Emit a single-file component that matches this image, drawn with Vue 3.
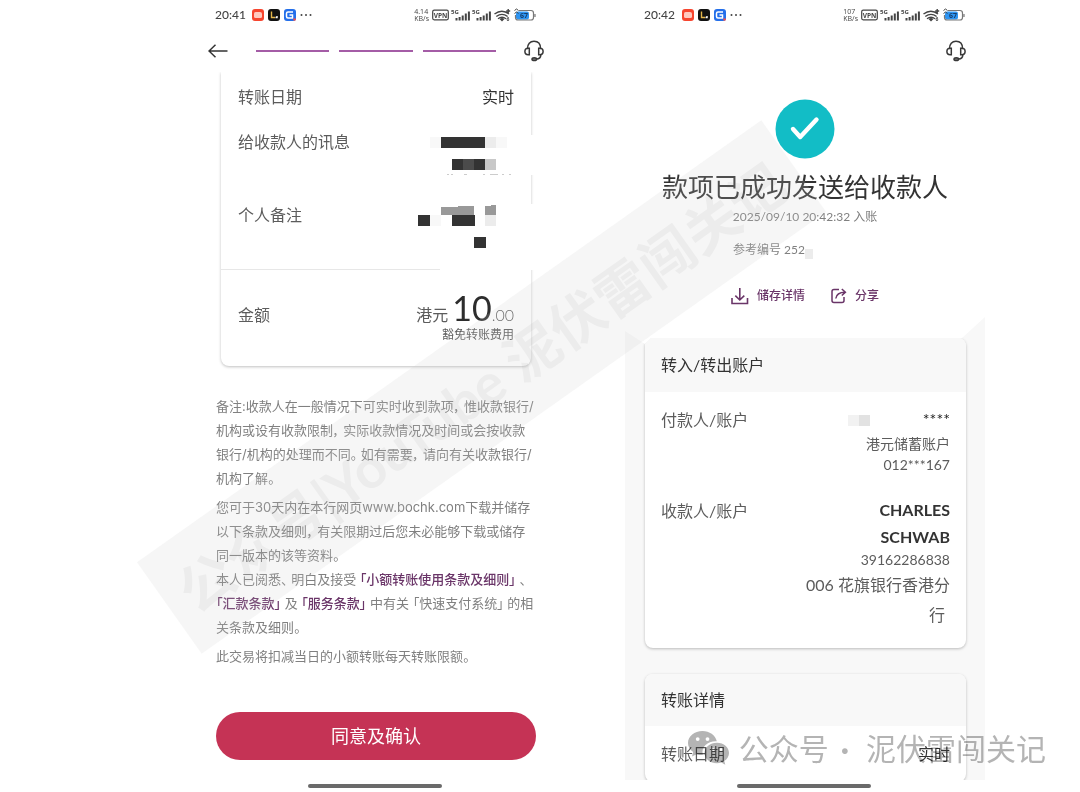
<script setup>
const noteOne = [
  '备注:收款人在一般情况下可实时收到款项， 惟收款银行/',
  '机构或设有收款限制， 实际收款情况及时间或会按收款',
  '银行/机构的处理而不同。 如有需要， 请向有关收款银行/',
  '机构了解。'
]
const noteTwo = [
  '您可于30天内在本行网页www.bochk.com下载并储存',
  '以下条款及细则， 有关限期过后您未必能够下载或储存',
  '同一版本的该等资料。'
]
const phones = [
  { id: 'confirm', time: '20:41', speed: '4.14' },
  { id: 'done', time: '20:42', speed: '107' }
]
</script>

<template>
  <main class="page">
    <section v-for="p in phones" :key="p.id" class="phone" :class="p.id">
      <div class="status">
        <span class="time">{{ p.time }}</span>
        <svg class="apps" width="62" height="12" viewBox="0 0 62 12" aria-hidden="true">
          <rect x="0" y="0" width="12" height="12" rx="3" fill="#f6452f" />
          <path d="M2 4.500q0-1.500 1.500-1.500h4.500q2 0 2 2v2.500q0 1.500-1.500 1.500h-5q-1.500 0-1.500-1.500z" fill="#ffc9bf" />
          <rect x="16" y="0" width="12" height="12" rx="3" fill="#111" />
          <path d="M19.500 2.500v6h3.500" fill="none" stroke="#e3b64b" stroke-width="1.400" />
          <path d="M23.500 8.500h1.500v-1.500" fill="none" stroke="#fff" stroke-width="1.400" />
          <rect x="32" y="0" width="12" height="12" rx="3" fill="#246fea" />
          <path d="M41 3h-5q-1.500 0-1.500 1.500v3q0 1.500 1.500 1.500h4.500v-3h-3" fill="none" stroke="#fff" stroke-width="1.500" />
          <circle cx="42.500" cy="10.500" r="1.300" fill="#f04a4a" />
          <g fill="#444"><circle cx="49.500" cy="6" r="1" /><circle cx="54" cy="6" r="1" /><circle cx="58.500" cy="6" r="1" /></g>
        </svg>
        <span class="speed">{{ p.speed }}<br />KB/s</span>
        <svg class="signals" width="104" height="14" viewBox="0 0 104 14" aria-hidden="true">
          <rect x="0.700" y="2.200" width="15.600" height="9.600" rx="1.500" fill="none" stroke="#444" stroke-width="1.200" />
          <text x="8.500" y="9.500" font-size="6.500" font-weight="700" text-anchor="middle" fill="#444">VPN</text>
          <g fill="#444">
            <text x="19" y="6" font-size="6" font-weight="700">5G</text>
            <path d="M23.500 10h2v2.500h-2zM26.600 9h2v3.500h-2zM29.700 7.500h2v5h-2zM32.800 5.500h2v7h-2zM35.900 3.500h2v9h-2z" />
            <text x="40" y="6" font-size="6" font-weight="700">5G</text>
            <path d="M44.500 10h2v2.500h-2zM47.600 9h2v3.500h-2zM50.700 7.500h2v5h-2zM53.800 5.500h2v7h-2zM56.900 3.500h2v9h-2z" />
            <path d="M67.500 11l2.500 2.500 2.500-2.500q-2.500-2-5 0z" />
            <text x="74.500" y="13" font-size="5" font-weight="700">6</text>
          </g>
          <path d="M62.500 6q7.500-5.500 14.500 0M64.300 8.500q5.700-4.200 11.300 0M66 10.700q4-3 8 0M76.200 1v4M74.200 3h4" fill="none" stroke="#444" stroke-width="1.400" />
          <rect x="84" y="3.500" width="13" height="8" rx="2" fill="#2d95f3" />
          <path d="M87 2.500h12q2.500 0 2.500 2.500v4.500q0 2.500-2.500 2.500h-13q-2.500 0-2.500-2.500v-2.500M103 6v3" fill="none" stroke="#777" stroke-width="1.200" />
          <path d="M82.500 2.500l2-1.500 2 1.500M82.500 5.500l2-1.500 2 1.500" fill="none" stroke="#444" stroke-width="1" />
          <text x="92" y="10" font-size="7" font-weight="700" text-anchor="middle" fill="#173d68">67</text>
        </svg>
      </div>

      <nav class="nav">
        <template v-if="p.id === 'confirm'">
          <button class="icon-button" type="button" aria-label="返回">
            <svg width="20" height="14" viewBox="0 0 20 14"><path d="M19.500 7H1M7.500 .8L1 7l6.500 6.200" fill="none" stroke="#333" stroke-width="1.500" /></svg>
          </button>
          <div class="steps"><i></i><i></i><i></i></div>
        </template>
        <button class="icon-button help" type="button" aria-label="客服">
          <svg width="20" height="22" viewBox="0 0 20 22" fill="none" stroke="#383838" stroke-width="1.500" stroke-linecap="round">
            <path d="M3.500 8.500C3.500 4 6 1.300 10 1.300S16.500 4 16.500 8.500" />
            <path d="M5.300 8.300v6.400H4.200C2.200 14.700.9 13.500.9 11.500S2.200 8.300 4.200 8.300zM14.700 8.300v6.400h1.100c2 0 3.300-1.200 3.300-3.200s-1.300-3.200-3.300-3.200z" />
            <path d="M16.800 14.800c0 3-1.500 4.200-4.300 4.300" />
            <ellipse cx="10.300" cy="19.200" rx="2.300" ry="1.400" fill="#777" />
          </svg>
        </button>
      </nav>

      <template v-if="p.id === 'confirm'">
        <article class="card transfer">
          <dl class="details">
            <div class="row"><dt>转账日期</dt><dd class="dark">实时</dd></div>
            <div class="row message"><dt>给收款人的讯息</dt><dd></dd></div>
            <div class="row memo"><dt>个人备注</dt><dd></dd></div>
          </dl>
          <div class="amount">
            <span>金额</span>
            <div class="sum">
              <p><span class="currency">港元</span> <strong>10</strong><span class="cents">.00</span></p>
              <small>豁免转账费用</small>
            </div>
          </div>
          <svg class="mosaic" width="126" height="138" viewBox="0 0 126 138" aria-hidden="true" shape-rendering="crispEdges">
            <path fill="#fff" d="M0 3h126v40H0zM0 72h126v66H22v-55H0z" />
            <path fill="#f8f8f8" d="M12 5h11v11H12zM78 5h11v11H78zM12 83h11v11H12z" />
            <path fill="#333" d="M23 5h44v11H23zM34 27h11v11H34zM56 27h11v11H56zM0 83h12v11H0zM34 83h23v11H34zM56 105h12v11H56z" />
            <path fill="#4b4b4b" d="M45 27h11v11H45z" />
            <path fill="#c8c8c8" d="M67 27h11v11H67z" />
            <path fill="#ececec" d="M67 5h11v11H67zM67 83h11v11H67z" />
            <path fill="#999" d="M23 75l33-1v9H23zM67 74l11-1v10H67z" />
            <path fill="#ccc" d="M29 42h2v1h-2zM33 42h2v1h-2zM46 42h3v1h-3zM65 42h2v1h-2zM72 42h8v1h-8zM84 42h2v1h-2zM91 42h2v1h-2z" />
          </svg>
        </article>

        <div class="notes">
          <p><span v-for="line in noteOne" :key="line">{{ line }}</span></p>
          <p>
            <span v-for="line in noteTwo" :key="line">{{ line }}</span>
            <span>本人已阅悉、 明白及接受 <a href="#terms">「小额转账使用条款及细则」</a> 、</span>
            <span><a href="#remit">「汇款条款」</a> 及 <a href="#service">「服务条款」</a> 中有关 「快速支付系统」 的相</span>
            <span>关条款及细则。</span>
          </p>
          <p><span>此交易将扣减当日的小额转账每天转账限额。</span></p>
        </div>
        <button class="submit" type="button">同意及确认</button>
      </template>

      <template v-else>
        <header class="result">
          <svg class="tick" width="60" height="60" viewBox="0 0 60 60" aria-hidden="true">
            <circle cx="30" cy="30" r="29.500" fill="#12bdc6" />
            <path d="M18 30l7.200 8L41.500 20.500" fill="none" stroke="#fff" stroke-width="4.400" stroke-linecap="round" stroke-linejoin="round" />
          </svg>
          <h1>款项已成功发送给收款人</h1>
          <p>2025/09/10 20:42:32 入账</p>
          <p class="reference">参考编号 252<i></i></p>
          <div class="actions">
            <button type="button">
              <svg width="18" height="17" viewBox="0 0 18 17" fill="none" stroke="#6a3568" stroke-width="1.600"><path d="M1 10v5.500h15.500V10M8.800 0v12M4.300 7.700l4.500 4.300 4.500-4.300" /></svg>
              储存详情
            </button>
            <button type="button">
              <svg width="16" height="16" viewBox="0 0 16 16" fill="none" stroke="#6a3568" stroke-width="1.500"><path d="M8 1.500H3Q1 1.500 1 3.500v9q0 2 2 2h8q2 0 2-2V9M4.800 10.500C5.300 6.500 8.500 4.200 14 4.200M10.800 1l3.600 3.200-3.600 3.300" /></svg>
              分享
            </button>
          </div>
        </header>

        <div class="sheet">
          <article class="card">
            <h2>转入/转出账户</h2>
            <dl class="accounts">
              <div class="row payer">
                <dt>付款人/账户</dt>
                <dd><span class="stars"><i></i><em>****</em></span><span>港元储蓄账户</span><span>012***167</span></dd>
              </div>
              <div class="row payee">
                <dt>收款人/账户</dt>
                <dd><strong>CHARLES<br />SCHWAB</strong><span class="number">39162286838</span><span class="bank">006 花旗银行香港分<br /><b>行</b></span></dd>
              </div>
            </dl>
          </article>
          <article class="card next">
            <h2>转账详情</h2>
            <dl class="accounts"><div class="row"><dt>转账日期</dt><dd class="dark">实时</dd></div></dl>
          </article>
        </div>
      </template>
      <div class="home"></div>
    </section>

    <div class="banner" aria-hidden="true">公众号|YouTube 泥伏雷闯关记</div>
    <div class="credit">
      <svg width="42" height="34" viewBox="0 0 42 34" aria-hidden="true">
        <path fill="#b4b4b4" fill-rule="evenodd" d="M14.500 0C6.500 0 0 5.200 0 11.900c0 3.700 2 6.900 5.200 9.100L4 25.500l5-2.600c1.900.6 3.500.9 5.800.9-2-8.500 5.500-14 14-13.500C27.300 4.200 21.500 0 14.500 0zM9.700 6.200a1.900 1.900 0 110 3.800 1.900 1.900 0 010-3.800zm9.800 0a1.900 1.900 0 110 3.800 1.900 1.900 0 010-3.800z" />
        <path fill="#b4b4b4" fill-rule="evenodd" d="M29 11.700c-7 0-12.500 4.600-12.500 10.300S22 32.200 29 32.200c1.500 0 3-.3 4.300-.7l4 2.200-1-3.700c2.900-1.900 4.700-4.800 4.700-8 0-5.700-5.200-10.300-12-10.300zm-4 5.300a1.500 1.500 0 110 3 1.500 1.500 0 010-3zm8 0a1.500 1.500 0 110 3 1.500 1.500 0 010-3z" />
      </svg>
      <span>公众号<b>·</b>泥伏雷闯关记</span>
    </div>
  </main>
</template>

<style>
body {
  margin: 0;
  background: #fff;
}
</style>

<style scoped>
* {
  box-sizing: border-box;
}
.page {
  position: relative;
  display: grid;
  grid-template-columns: 196fr 360fr 69fr 360fr 95fr;
  min-height: 100vh;
  overflow: hidden;
  background: #fff;
  color: #5c5c5c;
  font: 16px/24px Lato, "Noto Sans CJK SC", sans-serif;
}
p, h1, h2, dl, dd {
  margin: 0;
}
button {
  padding: 0;
  border: 0;
  background: none;
  color: inherit;
  font: inherit;
}
.phone {
  grid-column: 2;
  display: flex;
  flex-direction: column;
}
.phone.done {
  grid-column: 4;
}
.status {
  display: flex;
  align-items: center;
  height: 29px;
  padding: 0 20px 0 19px;
  color: #444;
}
.time {
  font-size: 12px;
  font-weight: 500;
}
.apps {
  margin-left: 6px;
}
.done .apps {
  margin-left: 7px;
}
.speed {
  margin: 0 3px 0 auto;
  font-family: "Open Sans", sans-serif;
  font-size: 7px;
  line-height: 7px;
}
.signals {
  font-family: "Open Sans", sans-serif;
}
.nav {
  display: flex;
  align-items: center;
  height: 43px;
  padding: 0 12px;
}
.done .nav {
  padding-right: 19px;
}
.icon-button {
  display: flex;
}
.help {
  margin-left: auto;
}
.steps {
  display: flex;
  flex: 1;
  gap: 10px;
  margin: 0 28px;
}
.steps i {
  flex: 1;
  height: 2px;
  background: #a45ca6;
}
.card {
  position: relative;
  flex-shrink: 0;
  border-radius: 8px;
  background: #fff;
  box-shadow: 0 1px 3px rgba(0, 0, 0, .25);
}
.transfer {
  margin: 0 25px;
  border-radius: 0 0 8px 8px;
  clip-path: inset(0 -8px -8px -8px);
}
.details {
  display: flex;
  flex-direction: column;
  gap: 21px;
  height: 198px;
  padding: 13px 17px 0;
  border-bottom: 1px solid #e7e7e7;
}
.row {
  display: flex;
  justify-content: space-between;
}
.message {
  min-height: 52px;
}
.dark {
  color: #333;
}
.mosaic {
  position: absolute;
  top: 60px;
  right: -13px;
}
.amount {
  display: flex;
  justify-content: space-between;
  height: 96px;
  padding: 18px 17px 0;
}
.amount > span {
  padding-top: 15px;
}
.sum {
  text-align: right;
}
.sum p {
  height: 40px;
  line-height: 40px;
}
.sum strong {
  color: #2d2d2d;
  font-size: 34px;
  font-weight: 400;
}
.sum small {
  display: block;
  font-size: 12px;
  line-height: 14px;
}
.cents {
  font-weight: 300;
}
.notes {
  display: flex;
  flex-direction: column;
  gap: 5px;
  margin: 28px 20px 0;
  color: #808080;
  font-family: Inter, "Noto Sans CJK SC", sans-serif;
  font-size: 13px;
  font-feature-settings: "palt";
  white-space: nowrap;
}
.notes span {
  display: block;
}
.notes a {
  color: #6a3568;
  font-weight: 500;
  text-decoration: none;
}
.submit {
  height: 48px;
  margin: 44px 20px 0;
  border-radius: 24px;
  background: #c53355;
  color: #fff;
  font-size: 18px;
}
.home {
  width: 134px;
  height: 4px;
  margin: auto auto 4px 112px;
  border-radius: 2px;
  background: #6a6a6a;
}
.result {
  display: flex;
  flex-direction: column;
  align-items: center;
  padding-top: 27px;
  color: #808080;
  font-size: 12px;
}
.result h1 {
  margin-top: 10px;
  color: #333;
  font-size: 26px;
  font-weight: 400;
  line-height: 36px;
}
.reference {
  display: flex;
  align-items: center;
  width: 144px;
  margin-top: 9px;
}
.reference i {
  width: 8px;
  height: 10px;
  margin-top: 8px;
  background: #ececec;
}
.actions {
  display: flex;
  gap: 26px;
  margin-top: 22px;
  color: #6a3568;
  font-weight: 500;
}
.actions button {
  display: flex;
  align-items: center;
  gap: 8px;
}
.sheet {
  display: flex;
  flex-direction: column;
  gap: 26px;
  height: 463px;
  margin-top: 9px;
  padding: 21px 19px 0 20px;
  overflow: hidden;
  background: #f8f8f8;
  clip-path: polygon(0 14px, 20px 27px, 26px 21px, 337px 21px, 100% 0, 100% 100%, 0 100%);
}
.sheet h2 {
  padding: 15px 16px;
  border-radius: 8px 8px 0 0;
  background: #f8f8f8;
  color: #333;
  font-size: 16px;
  font-weight: 400;
}
.sheet .next h2 {
  padding: 14px 16px;
}
.accounts {
  padding: 16px;
}
.accounts dd {
  text-align: right;
}
.accounts dd span {
  display: block;
  font-size: 14px;
  line-height: 21px;
}
.payer {
  min-height: 91px;
}
.accounts .stars {
  display: flex;
  align-items: center;
  justify-content: flex-end;
  gap: 53px;
  height: 25px;
  color: #222;
  font-size: 16px;
}
.stars em {
  align-self: flex-start;
  font-style: normal;
}
.stars i {
  width: 22px;
  height: 11px;
  background: linear-gradient(90deg, #f2f2f2 50%, #e2e2e2 50%);
}
.payee {
  min-height: 133px;
}
.accounts .payee dd {
  margin-top: -3px;
}
.payee strong {
  display: block;
  color: #333;
  font-weight: 700;
  line-height: 27px;
}
.accounts .number {
  line-height: 20px;
}
.accounts .bank {
  font-size: 16px;
  line-height: 30px;
}
.bank b {
  padding-right: 5px;
  font-weight: 400;
}
.banner {
  position: absolute;
  top: 331px;
  left: 99px;
  width: 765px;
  height: 112px;
  transform: rotate(-35.300deg);
  background: rgba(205, 205, 205, .18);
  color: rgba(130, 130, 130, .08);
  font-size: 55px;
  font-weight: 700;
  line-height: 112px;
  text-align: center;
  white-space: nowrap;
  pointer-events: none;
}
.credit {
  position: absolute;
  right: 34px;
  bottom: 24px;
  display: flex;
  align-items: center;
  gap: 9px;
  color: #b4b4b4;
  font-size: 30px;
  line-height: 40px;
  mix-blend-mode: multiply;
  white-space: nowrap;
  pointer-events: none;
}
.credit b {
  padding: 0 17px 0 12px;
  font-weight: 700;
}
</style>
